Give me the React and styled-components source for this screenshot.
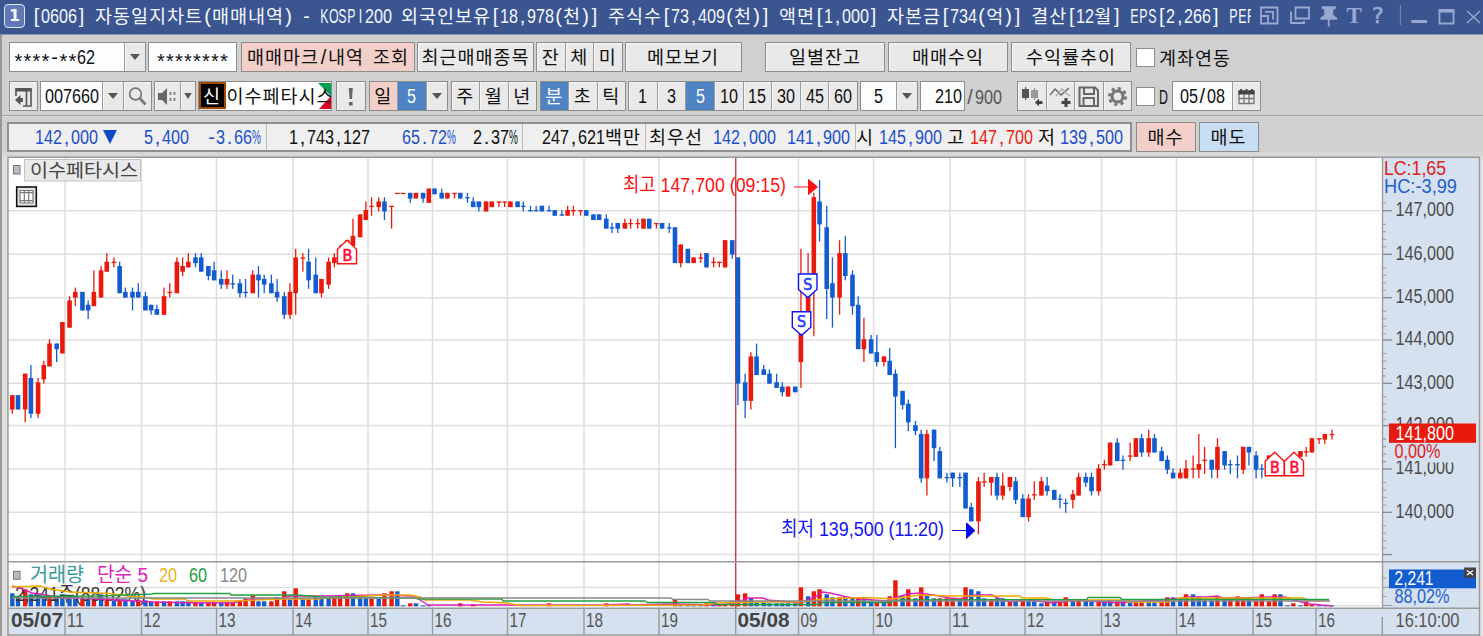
import styled, { createGlobalStyle, css } from 'styled-components';

const RED = '#e81a0c';
const BLUE = '#125cd0';
const QUOTE_BLUE = '#1c50cc';
const LATIN = '"Liberation Sans", sans-serif';
const HANGUL = '"Noto Sans CJK KR", sans-serif';
const PITCH = 9;

const GlobalStyle = createGlobalStyle`
	* {
		box-sizing: border-box;
	}

	body {
		margin: 0;
		background: #d0d0d0;
		overflow: hidden;
	}
`;

const Window = styled.div`
	width: 1483px;
	height: 636px;
	display: flex;
	flex-direction: column;
	background: #d0d0d0;
	overflow: hidden;
`;

// Fixed pitch text: a hangul syllable takes two latin cells
const Line = styled.span`
	display: inline-block;
	flex: none;
	white-space: pre;
	line-height: 28px;
	height: 28px;
	font-family: ${LATIN};
	font-size: 20px;
	color: ${({ $color }) => $color || 'inherit'};
	margin-left: ${({ $left }) => $left || 0}px;
`;

const Hangul = styled.span`
	font-family: ${HANGUL};
	font-size: 18.5px;
	line-height: 1;
	letter-spacing: 0.98px;
`;

// Squeezed run: laid out at its natural width, then narrowed to the pitch
const Squeezed = styled.span`
	display: inline-block;
	line-height: 1;
	text-align: center;
	transform-origin: 0 50%;
	width: ${({ $n, $scale }) => ($n * PITCH) / $scale}px;
	margin-right: ${({ $n, $scale }) => $n * PITCH * (1 - 1 / $scale)}px;
	transform: scaleX(${({ $scale }) => $scale}) translateY(${({ $drop }) => ($drop ? 4 : 0)}px);
`;

function scaleFor(part) {
	if (part === '%') return 0.5;
	if (/[A-Z]/.test(part)) return 0.62;
	if (/\d/.test(part)) return PITCH / 11.13;
	return 1;
}

function Text({ children, color, left }) {
	const parts = children.match(/[\uAC00-\uD7A3]+|\d+|[^\d\uAC00-\uD7A3]/g) || [];
	return (
		<Line $color={color} $left={left}>
			{parts.map((part, i) => {
				if (/[\uAC00-\uD7A3]/.test(part)) return <Hangul key={i}>{part}</Hangul>;
				return <Squeezed key={i} $n={part.length} $scale={scaleFor(part)} $drop={part === '*'}>{part}</Squeezed>;
			})}
		</Line>
	);
}

// Title bar
const TitleBar = styled.header`
	flex: none;
	height: 34.5px;
	display: flex;
	align-items: center;
	padding: 0 3px 1px 4px;
	background: #3a5590;
	border-bottom: 1px solid #8492b6;
	color: #f4f7ff;
`;

const WindowNumber = styled.span`
	width: 21px;
	height: 24px;
	flex: none;
	border: 1.5px solid #e0e6f5;
	border-radius: 4px;
	background: #6078b4;
	font: bold 16px/21px "DejaVu Sans", sans-serif;
	text-align: center;
`;

const TitleText = styled.div`
	width: 1219px;
	margin-left: 7px;
	flex: none;
	overflow: hidden;
	height: 28px;
`;

const TitleIcons = styled.svg`
	width: 232px;
	height: 32px;
	flex: none;
	color: #98a8d0;
`;

const Body = styled.main`
	flex: 1;
	display: flex;
	flex-direction: column;
	border-left: 2px solid #999;
`;

// Toolbars
const Toolbar = styled.div`
	height: ${({ $h }) => $h}px;
	flex: none;
	display: flex;
	align-items: flex-end;
	padding-left: 7px;
	color: #111;
`;

const Group = styled.div`
	display: flex;
	flex: none;
	height: 30px;
	width: ${({ $w }) => $w}px;
	margin-left: ${({ $left }) => $left || 0}px;
	border: 1.5px solid #8c8c8c;
	background: #e9e9e9;
`;

const Segment = styled.div`
	flex: ${({ $w }) => ($w ? `0 0 ${$w}px` : '1 1 0')};
	min-width: 0;
	display: flex;
	align-items: center;
	justify-content: ${({ $align }) => $align || 'center'};
	overflow: hidden;
	background: ${({ $tone }) => ({ pink: '#f3cfc9', active: '#4e83c4', sky: '#c8def3', field: '#fcfdff' })[$tone] || '#e9e9e9'};
	color: ${({ $tone }) => ($tone === 'active' ? '#fff' : 'inherit')};
	padding: ${({ $pad }) => $pad || '0'};

	& + & {
		border-left: 1.5px solid #9a9a9a;
	}

	${({ $tone }) => !$tone && css`
		box-shadow: inset 1px 1px 0 #f6f6f6;
	`}
`;

const CreditTag = styled.span`
	width: 27px;
	height: 27px;
	flex: none;
	display: flex;
	justify-content: center;
	align-items: center;
	border: 2.5px solid #9c4c08;
	background: #000;
	color: #fff;
`;

const StockName = styled.div`
	flex: 1;
	position: relative;
	overflow: hidden;
	background: #fff;
	padding-left: 1px;
`;

const CornerFlags = styled.svg`
	position: absolute;
	right: 0;
	top: 1px;
	width: 13px;
	height: 26px;
`;

const StockText = styled.div`
	position: relative;
`;

const Caret = styled.span`
	border: 5.5px solid transparent;
	border-top: 6px solid #555;
	border-bottom: 0;
	transform: scaleX(${({ $small }) => ($small ? 0.75 : 1)});
`;

const CheckBox = styled.span`
	width: 19px;
	height: 19px;
	flex: none;
	margin: 0 4px 5px ${({ $left }) => $left}px;
	background: #fff;
	border: 1.5px solid #8c8c8c;
`;

const Icon = styled.svg`
	width: 25px;
	height: 25px;
	flex: none;
	color: #555;
`;

const Rule = styled.div`
	flex: none;
	height: 2px;
	margin-top: 4px;
	background: #a2a2a2;
	border-bottom: 1px solid #dcdcdc;
`;

// Quote strip
const QuoteRow = styled.div`
	display: flex;
	flex: none;
	margin-top: 5px;
	padding-left: 5px;
	color: #111;
`;

const Quotes = styled.div`
	display: flex;
	width: 1125px;
	height: 30px;
	border: 2px solid #8f8f8f;
	background: #efefef;
`;

const Quote = styled.div`
	display: flex;
	align-items: center;
	width: ${({ $w }) => $w}px;
	flex: none;

	& + & {
		border-left: 1.5px solid #bbb;
	}
`;

const DownMark = styled.span`
	margin-left: 5px;
	border: 7.5px solid transparent;
	border-top: 14px solid #1048c4;
	border-bottom: 0;
`;

const Chart = styled.svg`
	display: block;
	flex: none;
	width: 1481px;
	height: 484px;
`;

const TITLE = '[0606] 자동일지차트(매매내역) - KOSPI200 외국인보유[18,978(천)] 주식수[73,409(천)] 액면[1,000] 자본금[734(억)] 결산[12월] EPS[2,266] PER';

// colour, body top, body bottom, high, low - in hundreds of won
const CANDLES = `
R 1427 1424 1427 1423;B 1427 1424 1427 1424;R 1432 1424 1432 1421;B 1431 1423 1434 1422;R 1430 1423 1431 1422
R 1434 1431 1435 1430;R 1439 1434 1440 1434;B 1439 1438 1439 1435;R 1444 1437 1444 1437;R 1449 1443 1450 1443
R 1451 1450 1452 1448;B 1451 1447 1451 1447;B 1448 1447 1449 1445;R 1451 1448 1456 1448;R 1456 1450 1457 1450
R 1458 1456 1460 1456;R 1458 1458 1459 1457;B 1457 1451 1458 1451;B 1451 1450 1452 1450;B 1451 1450 1452 1447
B 1451 1450 1453 1450;B 1450 1447 1451 1447;B 1448 1447 1448 1446;B 1447 1446 1448 1446;R 1450 1446 1452 1446
R 1451 1451 1453 1450;R 1458 1451 1459 1451;R 1457 1456 1459 1455;R 1458 1457 1460 1457;B 1459 1458 1460 1457
B 1459 1456 1460 1456;B 1457 1455 1457 1454;B 1456 1454 1458 1454;B 1454 1453 1456 1452;R 1454 1453 1456 1452
B 1453 1453 1455 1452;B 1453 1451 1454 1450;B 1451 1451 1454 1450;R 1455 1451 1456 1451;B 1455 1454 1457 1450
B 1454 1453 1455 1451;B 1453 1451 1455 1451;B 1451 1450 1454 1449;B 1450 1446 1451 1445;R 1451 1446 1453 1445
R 1459 1451 1461 1446;R 1459 1459 1460 1456;B 1458 1454 1461 1452;B 1455 1451 1459 1451;R 1454 1451 1454 1450
R 1458 1453 1459 1452;R 1459 1458 1460 1457;B 1461 1460 1462 1460;R 1463 1461 1463 1460;R 1464 1462 1468 1462
R 1469 1464 1469 1464;R 1470 1468 1472 1468;R 1471 1471 1473 1469;R 1472 1471 1473 1470;B 1472 1470 1473 1468
R 1471 1471 1471 1466;R 1474 1474 1474 1474;R 1474 1474 1474 1474;B 1474 1473 1474 1472;R 1474 1473 1474 1473
B 1474 1473 1474 1472;R 1475 1472 1475 1472;B 1475 1474 1475 1474;B 1474 1473 1475 1473;R 1474 1473 1474 1473
R 1474 1474 1474 1473;B 1474 1473 1474 1473;B 1473 1473 1474 1472;B 1472 1471 1473 1471;B 1472 1471 1472 1470
R 1472 1470 1472 1470;R 1472 1471 1472 1471;R 1472 1472 1472 1471;R 1472 1472 1472 1471;R 1472 1471 1472 1471
B 1472 1471 1472 1471;B 1471 1471 1472 1470;B 1470 1470 1471 1470;B 1470 1470 1471 1470;B 1471 1470 1471 1470
B 1470 1470 1471 1470;B 1470 1469 1470 1469;B 1469 1469 1470 1469;R 1470 1469 1471 1469;R 1470 1470 1471 1469
R 1470 1470 1470 1469;B 1470 1469 1470 1469;B 1469 1468 1469 1468;B 1469 1468 1469 1468;B 1468 1466 1469 1466
B 1466 1466 1467 1465;B 1467 1466 1467 1465;R 1467 1466 1468 1466;R 1467 1467 1468 1466;R 1467 1467 1468 1466
R 1468 1466 1468 1466;B 1468 1466 1468 1466;R 1467 1467 1467 1466;B 1467 1466 1467 1466;B 1466 1466 1467 1465
B 1466 1458 1466 1458;R 1462 1458 1462 1457;B 1461 1458 1461 1458;R 1459 1458 1459 1458;R 1459 1459 1460 1458
B 1460 1457 1460 1457;R 1458 1458 1459 1457;R 1458 1458 1458 1457;R 1463 1457 1463 1457;B 1463 1460 1463 1459
B 1459 1430 1459 1425;B 1430 1426 1432 1422;R 1436 1426 1437 1424;B 1436 1432 1439 1432;B 1433 1432 1434 1432
B 1432 1430 1433 1430;B 1430 1429 1432 1429;B 1429 1428 1430 1427;R 1429 1427 1429 1427;B 1429 1428 1429 1428
R 1445 1435 1461 1429;R 1455 1444 1460 1444;R 1473 1455 1474 1441;B 1472 1467 1477 1463;B 1466 1452 1471 1445
B 1453 1450 1459 1443;R 1460 1450 1463 1446;B 1460 1455 1464 1454;B 1455 1448 1456 1446;B 1448 1438 1450 1438
R 1440 1438 1445 1435;B 1440 1437 1441 1437;B 1437 1435 1441 1434;R 1436 1435 1436 1434;B 1435 1432 1438 1432
B 1432 1427 1433 1415;B 1428 1425 1428 1424;B 1425 1421 1426 1419;B 1420 1419 1421 1418;B 1418 1408 1419 1407
R 1418 1408 1419 1404;B 1419 1415 1419 1412;B 1414 1408 1415 1408;B 1408 1408 1409 1407;B 1409 1408 1409 1406
B 1408 1408 1409 1406;B 1409 1401 1409 1401;B 1401 1398 1402 1398;R 1407 1398 1408 1395;R 1407 1407 1409 1406
R 1408 1407 1408 1404;B 1408 1404 1409 1403;R 1406 1404 1409 1403;R 1408 1406 1408 1405;B 1407 1403 1408 1402
B 1403 1399 1404 1399;R 1403 1399 1404 1398;R 1404 1404 1407 1403;R 1407 1404 1408 1404;B 1406 1405 1408 1404
B 1405 1403 1405 1403;B 1403 1403 1404 1401;B 1402 1402 1403 1400;R 1404 1403 1405 1401;R 1408 1404 1409 1404
B 1408 1407 1409 1406;B 1408 1405 1409 1404;R 1410 1405 1411 1404;R 1411 1411 1412 1410;R 1416 1411 1416 1411
B 1416 1412 1417 1412;B 1412 1412 1413 1410;R 1413 1413 1416 1412;R 1417 1413 1417 1413;B 1417 1414 1418 1413
R 1417 1414 1419 1413;B 1417 1414 1418 1414;B 1414 1412 1415 1412;B 1412 1410 1413 1409;B 1409 1408 1410 1408
R 1409 1408 1410 1408;R 1410 1408 1412 1408;R 1410 1410 1413 1408;R 1411 1410 1418 1408;R 1412 1412 1415 1409
B 1412 1410 1412 1408;R 1415 1410 1417 1408;B 1414 1411 1414 1410;B 1411 1411 1412 1409;B 1411 1411 1413 1408
R 1415 1410 1415 1409;B 1415 1414 1415 1411;B 1413 1410 1414 1408;B 1410 1410 1411 1408;R 1413 1411 1413 1411
R 1412 1411 1412 1411;R 1412 1411 1412 1411;R 1412 1411 1412 1411;R 1413 1412 1413 1412;R 1414 1413 1414 1413
R 1414 1414 1415 1413;R 1417 1414 1417 1414;R 1417 1417 1417 1416;R 1418 1417 1418 1416;R 1418 1418 1419 1417
`.trim().split(/[;\n]/).map((row) => {
	const [color, ...prices] = row.split(' ');
	return [color, ...prices.map(Number)];
});

// colour and bar height, one entry per candle
const VOLUMES = `
B13 B10 R17 B12 B12 B8 R11 B10 B12 B11 B10 R8 B8 R8 B12 R7 B6 R6 B7 B6 R6 B6 B5 R5 B5 R5 B5 B5 B5 R4
B4 R4 R4 B4 R4 R4 R5 R8 R11 B5 B5 R5 R9 R15 B7 R18 B8 R7 B9 B8 B8 R9 R10 R13 B13 B8 B8 R8 B8 R13
R15 B15 B1 R3 B3 B1 B1 B0 B0 B0 B0 R3 B0 R2 B0 B0 B0 B0 B0 B0 B0 B0 B0 B0 B0 R3 B0 B0 B0 B0
B0 B0 B0 B0 R3 B0 B0 B0 B0 B0 B0 B0 B0 B0 B0 R7 B2 B2 B2 B2 R3 B2 R2 R2 R5 R12 R13 B8 B4 B4
B3 B3 B3 B3 B3 R19 B10 R15 R17 B12 B9 R9 B9 B9 R8 B8 B5 R4 B4 R10 R26 B10 R17 B8 R19 B11 B8 R8 R8 R8
B7 R19 B17 B15 B8 R7 B8 B8 R5 B5 R7 B5 B5 B3 R5 B5 R5 R9 B6 R6 B6 B5 R5 B5 B6 R5 B5 B4 R4 R4
B4 B4 R5 R9 B9 B7 R12 B12 B10 B6 B6 R10 B7 R7 R10 R8 B9 R6 R12 R5 R12 B12 B1 R3 B1 R5 R2 B1 B1 B1
`.trim().split(/\s+/).map((v) => [v[0], Number(v.slice(1))]);

const AVERAGES = [
	['#e020b8', '12,586 20,588 32,593 40,594 63,598 100,599 133,601 153,602 200,603 233,603 240,601 257,599 280,599 290,596 323,596 383,595 413,596 420,600 428,605 520,605 603,605 628,604 632,605 670,604 717,605 737,603 747,598 763,598 768,600 800,603 813,598 823,592 830,593 847,597 860,599 887,601 895,598 907,594 920,593 933,595 950,598 960,599 973,595 992,595 1000,599 1010,602 1027,600 1053,603 1080,600 1100,602 1120,603 1173,599 1190,597 1207,597 1217,596 1223,598 1240,598 1270,597 1285,597 1293,600 1310,604 1332,606'],
	['#eeaa00', '12,587 40,586 50,589 70,592 110,593.5 128,596 143,597 153,599 185,599 188,601 233,601 283,599 317,599 325,598 350,597 383,595 410,595 420,597 425,600 470,600 483,602 507,603 520,605.5 703,605 717,603 770,602 803,602 823,599 867,597.5 893,599 920,595 950,596 1020,596 1022,598 1045,598 1055,600 1125,600 1127,602 1170,602 1180,598 1303,598 1307,600 1328,600'],
	['#20a040', '12,596.5 100,596 127,595 152,594 153,593.5 230,593.5 231,595 297,595 323,597 413,598 420,599 502,599 503,601 645,601 647,602.5 715,602.5 717,604.5 820,604.5 823,602.5 890,602.5 900,600 1087,599.5 1088,597.5 1120,597.5 1122,599.5 1329,599.5'],
	['#888888', '12,598 671,598 673,599.5 708,599.5 710,601 1330,601'],
];

const HOURS = [
	[65, '11'], [141.5, '12'], [216.5, '13'], [293, '14'], [368, '15'], [432.5, '16'],
	[507.5, '17'], [584, '18'], [659, '19'], [798.5, '09'], [873.5, '10'], [950, '11'],
	[1025, '12'], [1101.5, '13'], [1176.5, '14'], [1253, '15'], [1316, '16'],
];

const LEVELS = [
	[210.7, '147,000'], [254.3, '146,000'], [297.7, '145,000'], [340, '144,000'], [383.3, '143,000'],
	[425.6, '142,000'], [469, '141,000'], [512.3, '140,000'], [554.6, ''],
];

const candleX = (i) => 12.3 + Math.round(4.41 * i) * 1.4313;
const priceY = (p) => 210.7 + (1470 - p) * 4.305;

function ChartText({ x, y, w, fill, size = 20, bold, children }) {
	return (
		<text
			x={x}
			y={y}
			fill={fill}
			fontSize={size}
			fontWeight={bold ? 700 : 400}
			fontFamily={`"Liberation Sans", "Noto Sans CJK KR", sans-serif`}
			textLength={w}
			lengthAdjust="spacingAndGlyphs"
		>
			{children}
		</text>
	);
}

function BuyMark({ x, y }) {
	return (
		<g>
			<path d={`M${x} ${y + 9}L${x + 9.5} ${y}L${x + 19} ${y + 9}V${y + 23.5}H${x}Z`} fill="#fff" stroke="#ff1010" strokeWidth="1.4" />
			<text x={x + 9.7} y={y + 20.5} textAnchor="middle" fill="#ff1038" fontSize="16" fontFamily="DejaVu Sans Mono" stroke="#ff1038" strokeWidth="0.5">B</text>
		</g>
	);
}

function SellMark({ x, y }) {
	return (
		<g>
			<path d={`M${x} ${y}H${x + 18.5}V${y + 15.5}L${x + 9.25} ${y + 23.5}L${x} ${y + 15.5}Z`} fill="#fff" stroke="#1010f0" strokeWidth="1.4" />
			<text x={x + 9.25} y={y + 15.5} textAnchor="middle" fill="#2038ff" fontSize="16" fontFamily="DejaVu Sans Mono" stroke="#2038ff" strokeWidth="0.5">S</text>
		</g>
	);
}

function PriceChart() {
	return (
		<Chart viewBox="2 152 1481 484">
			<rect x="2" y="152" width="1481" height="5" fill="#d6d6d6" />
			<rect x="2" y="156" width="5.5" height="480" fill="#e0e0e0" />
			<rect x="1479" y="156" width="4" height="480" fill="#e2e2e2" />
			<rect x="8" y="157" width="1472" height="479" fill="#fff" />
			<rect x="1382.5" y="157" width="97" height="479" fill="#d6e1ef" />
			<rect x="8" y="608" width="1472" height="27" fill="#d6e1ef" />

			<g stroke="#dedede" strokeWidth="1.5">
				{LEVELS.map(([y]) => <path key={y} d={`M8 ${y}H1380`} />)}
				{HOURS.map(([x]) => <path key={x} d={`M${x} 158V608`} />)}
				<path d="M8 587.5H1380M8 605.7H1380" />
			</g>
			<path d="M735.7 157V608" stroke="#c04048" strokeWidth="1.4" />

			{CANDLES.map(([c, top, bottom, high, low], i) => {
				const x = candleX(i);
				const fill = c === 'R' ? RED : BLUE;
				const flat = top === bottom;
				return (
					<g key={i} fill={fill}>
						{high > low && <rect x={x - 0.65} y={priceY(high) - 0.6} width="1.3" height={priceY(low) - priceY(high) + 1.3} />}
						<rect x={x - 2.3} y={priceY(top) - 0.65} width="4.6" height={flat ? 1.3 : priceY(bottom) - priceY(top) + 1.4} />
					</g>
				);
			})}

			{VOLUMES.map(([c, h], i) => h > 0 && (
				<rect key={i} x={candleX(i) - 2.2} y={606.3 - h} width="4.4" height={h} fill={c === 'R' ? RED : BLUE} />
			))}
			<ChartText x={15} y={601} w={131} fill="#333">2,241주(88.02%)</ChartText>
			{AVERAGES.map(([color, points]) => (
				<polyline key={color} points={points} fill="none" stroke={color} strokeWidth="1.4" />
			))}

			<BuyMark x={337.5} y={240.3} />
			<SellMark x={798.5} y={274} />
			<SellMark x={792.3} y={311.7} />
			<BuyMark x={1265.2} y={452.3} />
			<BuyMark x={1284.5} y={452.3} />

			<ChartText x={623} y={192} w={163} fill="#ff1010">최고 147,700 (09:15)</ChartText>
			<path d="M794 187H810M808.5 179.5V194.5L817.5 187Z" fill="#ff1010" stroke="#ff1010" />
			<ChartText x={781} y={535.5} w={163} fill="#1414f0">최저 139,500 (11:20)</ChartText>
			<path d="M952 530.5H968M966.5 523V538.5L975 530.5Z" fill="#0808f0" stroke="#0808f0" />

			<rect x="24.5" y="159.5" width="116" height="21.5" fill="#e9e9e9" stroke="#c2c2c2" />
			<rect x="13.5" y="165.5" width="6.5" height="8.5" fill="#bbb" stroke="#777" />
			<ChartText x={30} y={176.5} w={108} size={18} fill="#444">이수페타시스</ChartText>
			<rect x="16.7" y="187" width="19.6" height="19.4" fill="#e4e4e4" stroke="#111" strokeWidth="1.6" />
			<path d="M20 190.5H33V203H20ZM24.3 190.5V203M28.7 190.5V203M20 192.7H33M20 200.7H33" fill="#fff" stroke="#777" strokeWidth="1.2" />

			<path d="M8 561.7H1480M8 608.3H1480M8 635H1480" stroke="#9a9a9a" strokeWidth="1.4" />
			<path d="M8 636V157.2H1479.5V636M1382.5 157V608M1382.3 617V636" fill="none" stroke="#999" strokeWidth="1.4" />

			<rect x="13.5" y="571.3" width="6.5" height="8" fill="#bbb" stroke="#777" />
			<ChartText x={30} y={582} w={54} fill="#389a9c">거래량</ChartText>
			<ChartText x={97} y={582} w={51} fill="#e020b8">단순 5</ChartText>
			<ChartText x={159} y={582} w={18} fill="#eeb020">20</ChartText>
			<ChartText x={189} y={582} w={18} fill="#20a040">60</ChartText>
			<ChartText x={220} y={582} w={27} fill="#888">120</ChartText>

			{HOURS.map(([x, hour]) => (
				<g key={x}>
					<path d={`M${x} 608V635`} stroke="#999" strokeWidth="1.4" />
					<ChartText x={x + 2} y={627} w={17} fill="#555">{hour}</ChartText>
				</g>
			))}
			<path d="M735.7 608V635" stroke="#999" strokeWidth="1.4" />
			<ChartText x={11} y={627} w={52} fill="#444" bold>05/07</ChartText>
			<ChartText x={737.5} y={627} w={52} fill="#444" bold>05/08</ChartText>
			<ChartText x={1395.5} y={627} w={64} fill="#555">16:10:00</ChartText>

			{LEVELS.map(([y, label]) => (
				<g key={y}>
					<path d={`M1382 ${y}H1392`} stroke="#888" strokeWidth="1.3" />
					{label && <ChartText x={1395.5} y={y + 5.2} w={58.5} fill="#4c4c4c">{label}</ChartText>}
				</g>
			))}
			<g stroke="#999" strokeWidth="1.1">
				{LEVELS.slice(0, -1).map(([y]) => <path key={y} d={`M1383 ${y + 13.5}h3M1383 ${y + 21}h3M1383 ${y + 28.5}h3M1383 ${y + 36}h3`} />)}
				<path d="M1383 203h3M1383 578h3M1383 587.3h10M1383 596.5h3M1383 605.5h9" />
			</g>
			<ChartText x={1384} y={174.8} w={62} fill="#e02020">LC:1,65</ChartText>
			<ChartText x={1384} y={193} w={73} fill="#2060d0">HC:-3,99</ChartText>
			<rect x="1394" y="442.7" width="61" height="18.3" fill="#d6e1ef" />
			<rect x="1424" y="442.7" width="31" height="19.8" fill="#d6e1ef" />
			<rect x="1389" y="423.5" width="87" height="19.3" fill={RED} />
			<ChartText x={1395.5} y={439.8} w={58.5} fill="#fff">141,800</ChartText>
			<ChartText x={1394.5} y={457.8} w={46} fill="#e02020">0,00%</ChartText>
			<rect x="1389" y="569.5" width="87" height="18.8" fill={BLUE} />
			<ChartText x={1394.5} y={585.3} w={39} fill="#fff">2,241</ChartText>
			<ChartText x={1394.5} y={603} w={55} fill="#2060d0">88,02%</ChartText>
			<rect x="1464" y="567.5" width="12" height="10.5" fill="#444" />
			<path d="M1467 570.5L1473 575M1473 570.5L1467 575" stroke="#fff" strokeWidth="1.2" />
		</Chart>
	);
}

function Titlebar() {
	return (
		<TitleBar>
			<WindowNumber>1</WindowNumber>
			<TitleText><Text>{TITLE}</Text></TitleText>
			<TitleIcons viewBox="1251 0 232 32" fill="none" stroke="currentColor" strokeWidth="1.8">
				<path d="M1261 15V7.5H1277.500V23.5H1268.500M1261 16H1268V23.5H1261ZM1265 11.800H1273V19.500" />
				<path d="M1295.500 7.500H1309V18.500H1295.500ZM1292 12.500H1291V23H1304V21" />
				<path d="M1322 6.500H1335.500V9H1333V15L1337 18V19.500H1320.500V18L1324.500 15V9H1322Z" fill="currentColor" strokeWidth="0.5" />
				<path d="M1328.700 19V26.500" />
				<text x="1346.5" y="22.5" fill="currentColor" stroke="none" fontFamily="Liberation Serif" fontWeight="700" fontSize="23">T</text>
				<text x="1372" y="23" fill="currentColor" strokeWidth="0.6" fontFamily="DejaVu Sans" fontSize="22">?</text>
				<path d="M1400.500 5V25" stroke="#7181a8" strokeWidth="1.3" />
				<path d="M1411.500 21.500H1427" strokeWidth="3" />
				<path d="M1439.500 10V23.500H1453.500V10" />
				<path d="M1438.700 10.800H1454.300" strokeWidth="3.6" />
				<path d="M1467 11L1480 23M1480 11L1467 23" strokeWidth="1.4" />
			</TitleIcons>
		</TitleBar>
	);
}

function AccountBar() {
	return (
		<Toolbar $h={37.5}>
			<Group $w={137}>
				<Segment $tone="field" $align="flex-start" $pad="0 0 0 4px"><Text>****-**62</Text></Segment>
				<Segment $w={21}><Caret /></Segment>
			</Group>
			<Group $w={89} $left={2}><Segment $tone="field"><Text>********</Text></Segment></Group>
			<Group $w={174} $left={4}><Segment $tone="pink"><Text>매매마크/내역 조회</Text></Segment></Group>
			<Group $w={117} $left={2}><Segment><Text>최근매매종목</Text></Segment></Group>
			<Group $w={86.5} $left={2}>
				<Segment><Text>잔</Text></Segment>
				<Segment><Text>체</Text></Segment>
				<Segment><Text>미</Text></Segment>
			</Group>
			<Group $w={117} $left={2}><Segment><Text>메모보기</Text></Segment></Group>
			<Group $w={120} $left={23.5}><Segment><Text>일별잔고</Text></Segment></Group>
			<Group $w={120} $left={3}><Segment><Text>매매수익</Text></Segment></Group>
			<Group $w={120} $left={3}><Segment><Text>수익률추이</Text></Segment></Group>
			<CheckBox $left={5} />
			<Text>계좌연동</Text>
		</Toolbar>
	);
}

function StockBar() {
	return (
		<Toolbar $h={39}>
			<Group $w={29}>
				<Segment>
					<Icon viewBox="0 0 25 25">
						<path d="M5 7V5H20V22H12M5 5V12M15.500 6V22" fill="none" stroke="currentColor" strokeWidth="1.6" />
						<path d="M4.500 4H20.500V7.500H4.500ZM4 16L9.500 11V14H12V18H9.500V21Z" fill="currentColor" />
					</Icon>
				</Segment>
			</Group>
			<Group $w={112} $left={2}>
				<Segment $tone="field"><Text>007660</Text></Segment>
				<Segment $w={21}><Caret /></Segment>
				<Segment $w={28}>
					<Icon viewBox="0 0 25 25" fill="none" stroke="#777">
						<circle cx="10.5" cy="10" r="5.8" strokeWidth="1.7" />
						<path d="M15 14.500L20.500 20.500" strokeWidth="2.6" />
					</Icon>
				</Segment>
			</Group>
			<Group $w={42} $left={1.5}>
				<Segment>
					<Icon viewBox="0 0 25 25">
						<path d="M3 9H7L12 4V21L7 16H3Z" fill="#666" />
						<path d="M14.500 8h2v3h-2zM14.500 14h2v3h-2zM18.500 8h2v3h-2zM18.500 14h2v3h-2z" fill="#888" />
					</Icon>
				</Segment>
				<Segment $w={15}><Caret $small /></Segment>
			</Group>
			<Group $w={134.5} $left={2}>
				<CreditTag><Text>신</Text></CreditTag>
				<StockName>
					<CornerFlags viewBox="0 0 13 26">
						<path d="M0 0H13V13Z" fill="#00a050" />
						<path d="M13 13V26H1Z" fill="#e00028" />
					</CornerFlags>
					<StockText><Text>이수페타시스</Text></StockText>
				</StockName>
			</Group>
			<Group $w={30} $left={3.5}>
				<Segment>
					<Icon viewBox="0 0 25 25"><path d="M10.800 4H14.800L14 15H11.600ZM11 18H14.600V21.500H11Z" fill="#666" /></Icon>
				</Segment>
			</Group>
			<Group $w={79} $left={3}>
				<Segment $tone="pink"><Text>일</Text></Segment>
				<Segment $tone="active"><Text>5</Text></Segment>
				<Segment $w={21}><Caret /></Segment>
			</Group>
			<Group $w={86.5} $left={3}>
				<Segment><Text>주</Text></Segment>
				<Segment><Text>월</Text></Segment>
				<Segment><Text>년</Text></Segment>
			</Group>
			<Group $w={86.5} $left={2.5}>
				<Segment $tone="active"><Text>분</Text></Segment>
				<Segment><Text>초</Text></Segment>
				<Segment><Text>틱</Text></Segment>
			</Group>
			<Group $w={230} $left={2}>
				{['1', '3', '5', '10', '15', '30', '45', '60'].map((n) => (
					<Segment key={n} $tone={n === '5' ? 'active' : undefined}><Text>{n}</Text></Segment>
				))}
			</Group>
			<Group $w={58} $left={1.5}>
				<Segment $tone="field"><Text>5</Text></Segment>
				<Segment $w={21}><Caret /></Segment>
			</Group>
			<Group $w={45} $left={2}>
				<Segment $tone="field" $align="flex-end" $pad="0 2px 0 0"><Text>210</Text></Segment>
			</Group>
			<Text color="#555" left={1}>/900</Text>
			<Group $w={115} $left={15.5}>
				<Segment>
					<Icon viewBox="0 0 25 25">
						<path d="M3 5h7v9H3zM6 3h1.200v13H6z" fill="#555" />
						<path d="M12 6h7v8h-7zM15 4h1.200v12H15z" fill="#999" />
						<path d="M16 18.500L20 14.500V17H23.500V20H20V22.500Z" fill="#444" />
					</Icon>
				</Segment>
				<Segment>
					<Icon viewBox="0 0 25 25" fill="none">
						<path d="M2 11L7 5L13 11L21 4" stroke="#666" strokeWidth="1.3" />
						<path d="M8 12L14 5L19 10L22 12" stroke="#aaa" strokeWidth="1.2" />
						<path d="M18 14v9M13.500 18.500h9" stroke="#444" strokeWidth="3" />
					</Icon>
				</Segment>
				<Segment>
					<Icon viewBox="0 0 25 25" fill="none" stroke="#666" strokeWidth="2">
						<path d="M3.500 3.500H19L22 6.500V22H3.500ZM8 4V10H18V4M7.500 22V14H18V22" />
					</Icon>
				</Segment>
				<Segment>
					<Icon viewBox="0 0 25 25" fill="none" stroke="#777">
						<circle cx="12.5" cy="12.5" r="5.5" strokeWidth="3.2" />
						<circle cx="12.5" cy="12.5" r="8.2" strokeWidth="2.8" strokeDasharray="3.22 3.22" />
					</Icon>
				</Segment>
			</Group>
			<CheckBox $left={4} />
			<Text>D</Text>
			<Group $w={88.5} $left={4}>
				<Segment $tone="field"><Text>05/08</Text></Segment>
				<Segment $w={28}>
					<Icon viewBox="0 0 25 25" fill="none" stroke="#777">
						<path d="M5 7H20V19.500H5ZM5 14.500H20M10 10V19.500M15 10V19.500" strokeWidth="1.3" />
						<path d="M4.500 8.500H20.500" stroke="#444" strokeWidth="4" />
						<path d="M7 5v3M12.500 5v3M18 5v3" stroke="#444" strokeWidth="1.8" />
					</Icon>
				</Segment>
			</Group>
		</Toolbar>
	);
}

function QuoteStrip() {
	return (
		<QuoteRow>
			<Quotes>
				<Quote $w={257}>
					<Text left={26} color={QUOTE_BLUE}>142,000</Text>
					<DownMark />
					<Text left={27} color={QUOTE_BLUE}>5,400</Text>
					<Text left={18} color={QUOTE_BLUE}>-3.66%</Text>
				</Quote>
				<Quote $w={256}>
					<Text left={22}>1,743,127</Text>
					<Text left={32} color={QUOTE_BLUE}>65.72%</Text>
					<Text left={17}>2.37%</Text>
				</Quote>
				<Quote $w={123}><Text left={19}>247,621백만</Text></Quote>
				<Quote $w={210}>
					<Text left={3}>최우선</Text>
					<Text left={10} color={QUOTE_BLUE}>142,000</Text>
					<Text left={11} color={QUOTE_BLUE}>141,900</Text>
				</Quote>
				<Quote $w={275}>
					<Text left={0}>시</Text>
					<Text left={5} color={QUOTE_BLUE}>145,900</Text>
					<Text left={5}>고</Text>
					<Text left={5} color="#f02010">147,700</Text>
					<Text left={5}>저</Text>
					<Text left={4} color={QUOTE_BLUE}>139,500</Text>
				</Quote>
			</Quotes>
			<Group $w={60} $left={3.5}><Segment $tone="pink"><Text>매수</Text></Segment></Group>
			<Group $w={60} $left={3}><Segment $tone="sky"><Text>매도</Text></Segment></Group>
		</QuoteRow>
	);
}

export default function App() {
	return (
		<>
			<GlobalStyle />
			<Window>
				<Titlebar />
				<Body>
					<AccountBar />
					<StockBar />
					<Rule />
					<QuoteStrip />
					<PriceChart />
				</Body>
			</Window>
		</>
	);
}
